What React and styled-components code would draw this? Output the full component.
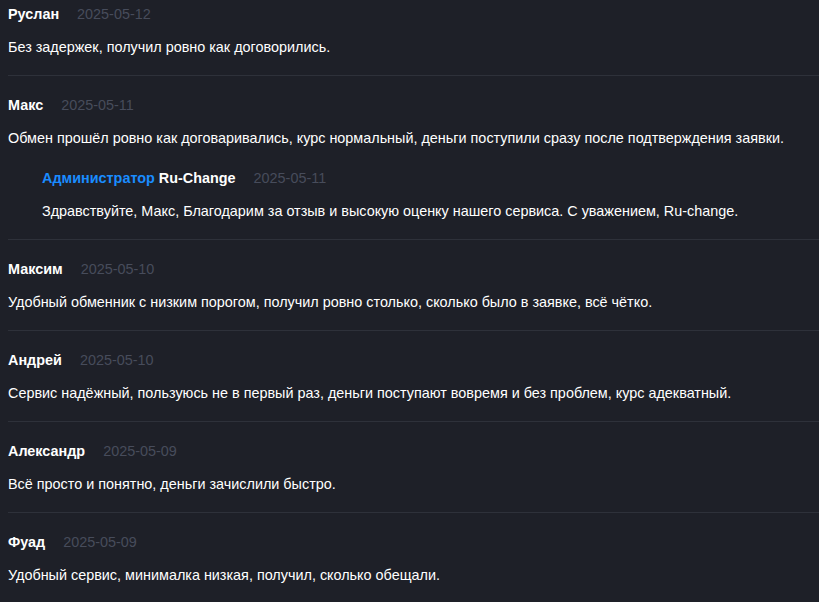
import React from 'react';
import styled, { createGlobalStyle } from 'styled-components';

const GlobalStyle = createGlobalStyle`
  html, body {
    margin: 0;
    padding: 0;
    background: #1e2028;
  }
  body {
    font-family: "Liberation Sans", Arial, sans-serif;
    color: #ffffff;
  }
`;

const reviews = [
  { id: 1, name: 'Руслан', date: '2025-05-12', text: 'Без задержек, получил ровно как договорились.' },
  {
    id: 2,
    name: 'Макс',
    date: '2025-05-11',
    text: 'Обмен прошёл ровно как договаривались, курс нормальный, деньги поступили сразу после подтверждения заявки.',
    reply: {
      date: '2025-05-11',
      text: 'Здравствуйте, Макс, Благодарим за отзыв и высокую оценку нашего сервиса. С уважением, Ru-change.',
    },
  },
  { id: 3, name: 'Максим', date: '2025-05-10', text: 'Удобный обменник с низким порогом, получил ровно столько, сколько было в заявке, всё чётко.' },
  { id: 4, name: 'Андрей', date: '2025-05-10', text: 'Сервис надёжный, пользуюсь не в первый раз, деньги поступают вовремя и без проблем, курс адекватный.' },
  { id: 5, name: 'Александр', date: '2025-05-09', text: 'Всё просто и понятно, деньги зачислили быстро.' },
  { id: 6, name: 'Фуад', date: '2025-05-09', text: 'Удобный сервис, минималка низкая, получил, сколько обещали.' },
];

const App = () => {
  return (
    <>
      <GlobalStyle />
      <List>
        {reviews.map(review => (
          <Review key={review.id}>
            <Header>
              <Author>{review.name}</Author>
              <Date>{review.date}</Date>
            </Header>
            <Text>{review.text}</Text>
            {review.reply && (
              <Reply>
                <Header>
                  <Author>
                    <Role>Администратор</Role> Ru-Change
                  </Author>
                  <Date>{review.reply.date}</Date>
                </Header>
                <Text>{review.reply.text}</Text>
              </Reply>
            )}
          </Review>
        ))}
      </List>
    </>
  );
};

const List = styled.div`
  display: flex;
  flex-direction: column;
  padding-left: 8px;
`;

const Review = styled.div`
  padding: 19px 0 18px;
  border-bottom: 1px solid #2e313a;
  &:first-child {
    padding-top: 4px;
  }
  &:last-child {
    border-bottom: none;
  }
`;

const Header = styled.div`
  display: flex;
  align-items: center;
  height: 20px;
`;

const Author = styled.span`
  font-size: 14.4px;
  font-weight: bold;
  color: #ffffff;
`;

const Role = styled.span`
  color: #1a8cff;
`;

const Date = styled.span`
  margin-left: 18px;
  font-size: 14.4px;
  color: #474c5b;
`;

const Text = styled.p`
  margin: 13px 0 0;
  font-size: 14.4px;
  line-height: 20px;
  color: #ffffff;
`;

const Reply = styled.div`
  margin: 20px 0 0 34px;
`;

export default App;
